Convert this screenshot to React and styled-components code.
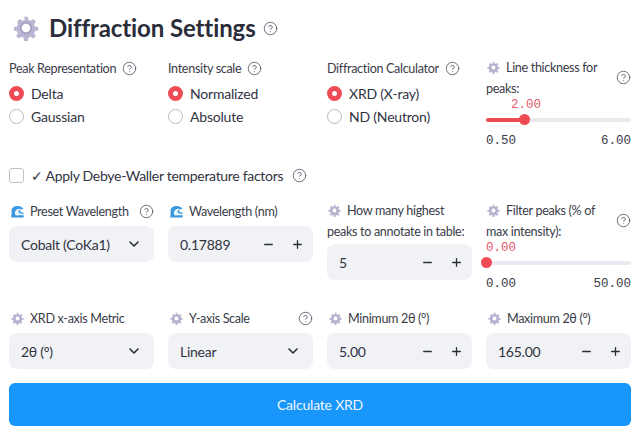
import React from "react";
import styled, { createGlobalStyle } from "styled-components";
import { CircleHelp, ChevronDown, Minus, Plus } from "lucide-react";

const Global = createGlobalStyle`
  html, body { margin: 0; padding: 0; background: #fff; }
  body { font-family: "Lato", "Noto Sans", sans-serif; color: #31333f; }
`;

const Page = styled.div`
  width: 640px;
  height: 429px;
  box-sizing: border-box;
  padding: 10px 9px 0;
  overflow: hidden;
`;
const TitleRow = styled.div`
  display: flex;
  align-items: center;
  height: 36px;
  margin-bottom: 12px;
  padding-left: 4px;
`;
const TitleText = styled.h1`
  margin: 0 7px 0 10px;
  font-size: 24px;
  line-height: 36px;
  font-weight: 700;
  letter-spacing: -0.1px;
  color: #2b2d3a;
`;
const Grid = styled.div`
  display: grid;
  grid-template-columns: repeat(4, 145px);
  column-gap: 14px;
  height: ${(p) => p.$h}px;
  align-items: start;
`;
const Field = styled.div`
  display: flex;
  flex-direction: column;
  min-width: 0;
`;
const LabelRow = styled.div`
  display: flex;
  align-items: center;
  justify-content: ${(p) => (p.$spread ? "space-between" : "flex-start")};
  gap: 6px;
  min-height: 20px;
`;
const WrapRow = styled(LabelRow)`
  min-height: 42px;
  margin-top: -1.5px;
`;
const LabelText = styled.span`
  font-size: 12.6px;
  line-height: 21px;
  letter-spacing: -0.33px;
  color: #3a3c49;
  white-space: ${(p) => (p.$wrap ? "normal" : "nowrap")};
`;
const InlineIcon = styled.span`
  display: inline-block;
  vertical-align: -2px;
  margin: 0 6px 0 ${(p) => p.$ml || 2}px;
  line-height: 0;
`;
const Help = styled(CircleHelp)`
  width: 15px;
  height: 15px;
  flex: none;
  color: #5b5d68;
  stroke-width: 1.4;
`;
const RadioGroup = styled.div`
  display: flex;
  flex-direction: column;
  margin-top: 4px;
  gap: 3px;
`;
const RadioRow = styled.div`
  display: flex;
  align-items: center;
  gap: 7px;
  height: 20px;
  font-size: 14px;
  letter-spacing: -0.2px;
  color: #31333f;
`;
const RadioDot = styled.span`
  box-sizing: border-box;
  width: 15px;
  height: 15px;
  border-radius: 50%;
  background: #fff;
  border: ${(p) => (p.$on ? "5px solid #ef4b55" : "1px solid #b9bac0")};
`;
const CheckRow = styled.div`
  display: flex;
  align-items: center;
  height: 20px;
  margin-bottom: 16px;
  gap: 7px;
`;
const CheckBox = styled.span`
  box-sizing: border-box;
  width: 15px;
  height: 15px;
  border: 1px solid #c0c1c7;
  border-radius: 3px;
  background: #fff;
`;
const CheckLabel = styled.span`
  font-size: 14px;
  letter-spacing: -0.3px;
  color: #31333f;
  margin-right: 2px;
`;
const SliderValue = styled.div`
  font-family: "Liberation Mono", monospace;
  font-size: 12.5px;
  line-height: 14px;
  height: 14px;
  margin-top: -1px;
  color: #e4586c;
  padding-left: ${(p) => p.$left}px;
`;
const Track = styled.div`
  position: relative;
  height: 4px;
  border-radius: 2px;
  background: #e9eaef;
  margin-top: 6px;
`;
const Fill = styled.div`
  height: 100%;
  border-radius: 2px;
  background: #ef4b55;
`;
const Thumb = styled.span`
  position: absolute;
  top: -3.5px;
  width: 11px;
  height: 11px;
  margin-left: -5.5px;
  border-radius: 50%;
  background: #ef4b55;
`;
const SliderEnds = styled.div`
  display: flex;
  justify-content: space-between;
  margin-top: 12px;
  font-family: "Liberation Mono", monospace;
  font-size: 12.5px;
  line-height: 14px;
  color: #3a3c49;
`;
const Box = styled.div`
  display: flex;
  align-items: center;
  height: 36px;
  margin-top: ${(p) => p.$mt}px;
  padding: 0 ${(p) => p.$pr}px 0 12px;
  border-radius: 8px;
  background: #f0f2f6;
  font-size: 14px;
  letter-spacing: -0.25px;
  color: #31333f;
`;
const BoxValue = styled.span`
  flex: 1;
  white-space: nowrap;
`;
const Stepper = styled.div`
  display: flex;
  align-items: center;
  gap: 16px;
  color: #2b2d3a;
  & svg { width: 13px; height: 13px; stroke-width: 2.4; }
`;
const Chevron = styled(ChevronDown)`
  width: 16px;
  height: 16px;
  stroke-width: 2.4;
  color: #2b2d3a;
`;
const Primary = styled.button`
  display: block;
  width: 622px;
  height: 43px;
  border: none;
  border-radius: 6px;
  background: #1896fb;
  color: #eef7ff;
  font-family: inherit;
  font-size: 14px;
  letter-spacing: -0.2px;
  padding: 0;
`;

const GEAR =
  "M10.3 1.5h3.4l.5 3a7.6 7.6 0 0 1 2 .8l2.5-1.7 2.4 2.4-1.7 2.5c.4.6.6 1.3.8 2l3 .5v3.4l-3 .5a7.6 7.6 0 0 1-.8 2l1.7 2.5-2.4 2.4-2.5-1.7c-.6.4-1.3.6-2 .8l-.5 3h-3.4l-.5-3a7.6 7.6 0 0 1-2-.8l-2.5 1.7-2.4-2.4 1.7-2.5a7.6 7.6 0 0 1-.8-2l-3-.5v-3.4l3-.5c.2-.7.4-1.4.8-2L3.9 6l2.4-2.4 2.5 1.7c.6-.4 1.3-.6 2-.8z";

function Gear({ size = 13 }) {
  return (
    <svg width={size} height={size} viewBox="0 0 24 24">
      <path fillRule="evenodd" d={GEAR + "M12 8a4 4 0 1 0 0 8 4 4 0 0 0 0-8z"} fill="#b9b6d2" />
      <circle cx="12" cy="12" r="5" fill="none" stroke="#9591b8" strokeWidth="1.4" opacity=".6" />
    </svg>
  );
}
function Wave() {
  return (
    <svg width="13" height="13" viewBox="0 0 24 24">
      <path d="M1 22V11C1 5 6 2 12 2c5 0 9 2 11 6-3-1-6 0-6 3 0 2 3 3 6 3v8z" fill="#3a96de" />
      <path d="M7 16c0-5 3-9 8-9 2 0 3 .5 4 1.300-3 0-5 1.700-5 4 0 2.500 3 4 9 4v3H9z" fill="#eaf6fd" />
      <path d="M1 19c4 2 8 2 11 1s7-1 11 0v3H1z" fill="#3a96de" />
    </svg>
  );
}

function Label({ icon, text, help }) {
  return (
    <LabelRow $spread={help === "end"}>
      <LabelText>
        {icon && <InlineIcon>{icon}</InlineIcon>}
        {text}
      </LabelText>
      {help && <Help />}
    </LabelRow>
  );
}
function Radios({ label, options }) {
  return (
    <Field>
      <Label text={label} help="inline" />
      <RadioGroup>
        {options.map((o, i) => (
          <RadioRow key={o}>
            <RadioDot $on={i === 0} />
            {o}
          </RadioRow>
        ))}
      </RadioGroup>
    </Field>
  );
}
function WrapLabel({ line1, line2, help }) {
  return (
    <WrapRow $spread>
      <LabelText $wrap>
        <InlineIcon $ml={1}><Gear /></InlineIcon>
        {line1}
        <br />
        {line2}
      </LabelText>
      {help && <Help />}
    </WrapRow>
  );
}
function Slider({ value, left, pct, min, max }) {
  return (
    <>
      <SliderValue $left={left}>{value}</SliderValue>
      <Track>
        <Fill style={{ width: `${pct}%` }} />
        <Thumb style={{ left: `${pct}%` }} />
      </Track>
      <SliderEnds>
        <span>{min}</span>
        <span>{max}</span>
      </SliderEnds>
    </>
  );
}
function Select({ value }) {
  return (
    <Box $pr={12} $mt={4}>
      <BoxValue>{value}</BoxValue>
      <Chevron />
    </Box>
  );
}
function NumberBox({ value, mt = 4 }) {
  return (
    <Box $pr={9} $mt={mt}>
      <BoxValue>{value}</BoxValue>
      <Stepper>
        <Minus />
        <Plus />
      </Stepper>
    </Box>
  );
}

export default function App() {
  return (
    <Page>
      <Global />
      <TitleRow>
        <Gear size={26} />
        <TitleText>Diffraction Settings</TitleText>
        <Help />
      </TitleRow>
      <Grid $h={107}>
        <Radios label="Peak Representation" options={["Delta", "Gaussian"]} />
        <Radios label="Intensity scale" options={["Normalized", "Absolute"]} />
        <Radios label="Diffraction Calculator" options={["XRD (X-ray)", "ND (Neutron)"]} />
        <Field>
          <WrapLabel line1="Line thickness for" line2="peaks:" help />
          <Slider value="2.00" left={25} pct={26.5} min="0.50" max="6.00" />
        </Field>
      </Grid>
      <CheckRow>
        <CheckBox />
        <CheckLabel>✓ Apply Debye-Waller temperature factors</CheckLabel>
        <Help />
      </CheckRow>
      <Grid $h={107}>
        <Field>
          <Label icon={<Wave />} text="Preset Wavelength" help="end" />
          <Select value="Cobalt (CoKa1)" />
        </Field>
        <Field>
          <Label icon={<Wave />} text="Wavelength (nm)" />
          <NumberBox value="0.17889" />
        </Field>
        <Field>
          <WrapLabel line1="How many highest" line2="peaks to annotate in table:" />
          <NumberBox value="5" mt={2.500} />
        </Field>
        <Field>
          <WrapLabel line1="Filter peaks (% of" line2="max intensity):" help />
          <Slider value="0.00" left={0} pct={0} min="0.00" max="50.00" />
        </Field>
      </Grid>
      <Grid $h={75}>
        <Field>
          <Label icon={<Gear />} text="XRD x-axis Metric" />
          <Select value="2θ (°)" />
        </Field>
        <Field>
          <Label icon={<Gear />} text="Y-axis Scale" help="end" />
          <Select value="Linear" />
        </Field>
        <Field>
          <Label icon={<Gear />} text="Minimum 2θ (°)" />
          <NumberBox value="5.00" />
        </Field>
        <Field>
          <Label icon={<Gear />} text="Maximum 2θ (°)" />
          <NumberBox value="165.00" />
        </Field>
      </Grid>
      <Primary>Calculate XRD</Primary>
    </Page>
  );
}
